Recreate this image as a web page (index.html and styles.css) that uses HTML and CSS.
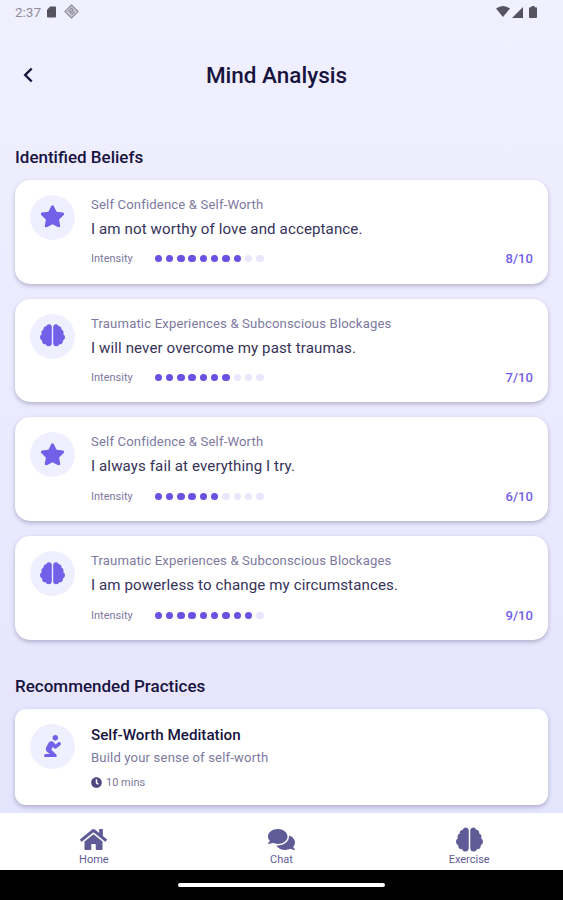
FILE: index.html
```html
<!DOCTYPE html>
<html lang="en">
<head>
  <meta charset="UTF-8" />
  <meta name="viewport" content="width=device-width, initial-scale=1.0"/>
  <title>Mind Analysis</title>
  <link rel="stylesheet" href="styles.css">
</head>
<body>

  <!-- Shared icons -->
  <svg class="sprite" aria-hidden="true">
    <symbol id="star" viewBox="0 0 576 512"><path d="M259.3 17.8L194 150.2 47.9 171.5c-26.2 3.8-36.7 36.1-17.7 54.6l105.7 103-25 145.5c-4.5 26.3 23.2 46 46.4 33.7L288 439.6l130.7 68.7c23.2 12.2 50.9-7.4 46.4-33.7l-25-145.5 105.7-103c19-18.5 8.5-50.8-17.7-54.6L382 150.2 316.7 17.8c-11.7-23.6-45.6-23.9-57.4 0z"/></symbol>
    <symbol id="brain" viewBox="0 0 576 512"><path d="M208 0c-29.9 0-54.7 20.5-61.8 48.2-.8 0-1.4-.2-2.2-.2-35.3 0-64 28.7-64 64 0 4.8.6 9.5 1.7 14C52.5 138 32 166.6 32 200c0 12.6 3.2 24.3 8.3 34.9C16.3 248.7 0 274.3 0 304c0 33.3 20.4 61.9 49.4 73.9-.9 4.6-1.4 9.3-1.4 14.1 0 39.8 32.2 72 72 72 4.1 0 8.1-.5 12-1.2 9.6 28.5 36.2 49.2 68 49.2 39.8 0 72-32.2 72-72V64c0-35.3-28.7-64-64-64zm368 304c0-29.7-16.3-55.3-40.3-69.1 5.2-10.6 8.3-22.3 8.3-34.9 0-33.4-20.5-62-49.7-74 1-4.5 1.7-9.2 1.7-14 0-35.3-28.7-64-64-64-.8 0-1.5.2-2.2.2C422.7 20.5 397.9 0 368 0c-35.3 0-64 28.6-64 64v376c0 39.8 32.2 72 72 72 31.8 0 58.4-20.7 68-49.2 3.9.7 7.9 1.2 12 1.2 39.8 0 72-32.2 72-72 0-4.8-.5-9.5-1.4-14.1 29-12 49.4-40.6 49.4-73.9z"/></symbol>
  </svg>

  <div class="status-bar">
    <div class="status-left">
      <span class="time">2:37</span>
      <svg class="sd" viewBox="0 0 10 12"><path d="M3.5 0H9a1 1 0 0 1 1 1v10a1 1 0 0 1-1 1H1a1 1 0 0 1-1-1V3.500z"/></svg>
      <svg class="diamond" viewBox="0 0 16 16"><path d="M8 1l7 7-7 7-7-7z"/><path d="M4.500 8L8 4.500l1.500 1.500M6.500 10L10 6.500M8 11.500L11.500 8M6.500 7.500L8 9"/></svg>
    </div>
    <div class="status-right">
      <svg class="wifi" viewBox="0 0 14 11"><path d="M0 2.500Q7-2.500 14 2.500L7 11z"/></svg>
      <svg class="signal" viewBox="0 0 11 11"><path d="M11 0v11H0z"/></svg>
      <svg class="battery" viewBox="0 0 8 12"><path d="M2.500 0h3v1.200H7a1 1 0 0 1 1 1V11a1 1 0 0 1-1 1H1a1 1 0 0 1-1-1V2.200a1 1 0 0 1 1-1h1.500z"/></svg>
    </div>
  </div>

  <header>
    <svg class="back" viewBox="0 0 10 16"><path d="M8.700 1.500L2.200 8l6.500 6.500"/></svg>
    <h1>Mind Analysis</h1>
  </header>

  <main>
    <h2>Identified Beliefs</h2>

    <div class="card">
      <div class="icon"><svg><use href="#star"/></svg></div>
      <div class="info">
        <p class="category">Self Confidence &amp; Self-Worth</p>
        <p class="belief">I am not worthy of love and acceptance.</p>
        <div class="intensity">
          <span class="label">Intensity</span>
          <div class="dots"><i class="on"></i><i class="on"></i><i class="on"></i><i class="on"></i><i class="on"></i><i class="on"></i><i class="on"></i><i class="on"></i><i></i><i></i></div>
          <span class="score">8/10</span>
        </div>
      </div>
    </div>

    <div class="card">
      <div class="icon"><svg><use href="#brain"/></svg></div>
      <div class="info">
        <p class="category">Traumatic Experiences &amp; Subconscious Blockages</p>
        <p class="belief">I will never overcome my past traumas.</p>
        <div class="intensity">
          <span class="label">Intensity</span>
          <div class="dots"><i class="on"></i><i class="on"></i><i class="on"></i><i class="on"></i><i class="on"></i><i class="on"></i><i class="on"></i><i></i><i></i><i></i></div>
          <span class="score">7/10</span>
        </div>
      </div>
    </div>

    <div class="card">
      <div class="icon"><svg><use href="#star"/></svg></div>
      <div class="info">
        <p class="category">Self Confidence &amp; Self-Worth</p>
        <p class="belief">I always fail at everything I try.</p>
        <div class="intensity">
          <span class="label">Intensity</span>
          <div class="dots"><i class="on"></i><i class="on"></i><i class="on"></i><i class="on"></i><i class="on"></i><i class="on"></i><i></i><i></i><i></i><i></i></div>
          <span class="score">6/10</span>
        </div>
      </div>
    </div>

    <div class="card">
      <div class="icon"><svg><use href="#brain"/></svg></div>
      <div class="info">
        <p class="category">Traumatic Experiences &amp; Subconscious Blockages</p>
        <p class="belief">I am powerless to change my circumstances.</p>
        <div class="intensity">
          <span class="label">Intensity</span>
          <div class="dots"><i class="on"></i><i class="on"></i><i class="on"></i><i class="on"></i><i class="on"></i><i class="on"></i><i class="on"></i><i class="on"></i><i class="on"></i><i></i></div>
          <span class="score">9/10</span>
        </div>
      </div>
    </div>

    <h2 class="practices">Recommended Practices</h2>

    <div class="card practice">
      <div class="icon"><svg viewBox="0 0 384 512"><path d="M256 128c35.350 0 64-28.650 64-64S291.350 0 256 0s-64 28.650-64 64 28.650 64 64 64zm-30.630 169.750c14.060 16.720 39 19.090 55.970 5.220l88-72.020c17.090-13.980 19.590-39.190 5.620-56.280-13.970-17.110-39.190-19.590-56.310-5.620l-57.440 47-38.910-46.310c-15.440-18.390-39.220-27.920-64-25.330-24.190 2.480-45.250 16.270-56.370 36.920l-49.370 92.030c-23.400 43.640-8.690 96.370 34.190 123.750L131.560 432H40c-22.090 0-40 17.910-40 40s17.910 40 40 40h208c34.080 0 53.770-42.790 28.280-68.280L166.420 333.860l34.800-64.870 24.150 28.760z"/></svg></div>
      <div class="info">
        <h3>Self-Worth Meditation</h3>
        <p class="description">Build your sense of self-worth</p>
        <div class="duration">
          <svg viewBox="0 0 512 512"><path d="M256 8C119 8 8 119 8 256s111 248 248 248 248-111 248-248S393 8 256 8zm57.100 350.100L224.900 294c-3.100-2.300-4.900-5.900-4.900-9.700V116c0-6.600 5.400-12 12-12h48c6.600 0 12 5.400 12 12v137.700l63.500 46.200c5.400 3.900 6.500 11.400 2.600 16.800l-28.200 38.800c-3.900 5.300-11.400 6.500-16.800 2.600z"/></svg>
          <span>10 mins</span>
        </div>
      </div>
    </div>
  </main>

  <nav>
    <a>
      <svg viewBox="0 0 576 512"><path d="M280.370 148.260L96 300.110V464a16 16 0 0 0 16 16l112.060-.29a16 16 0 0 0 15.920-16V368a16 16 0 0 1 16-16h64a16 16 0 0 1 16 16v95.640a16 16 0 0 0 16 16.050L464 480a16 16 0 0 0 16-16V300L295.670 148.260a12.190 12.190 0 0 0-15.300 0zM571.600 251.470L488 182.560V44.050a12 12 0 0 0-12-12h-56a12 12 0 0 0-12 12v72.610L318.470 43a48 48 0 0 0-61 0L4.340 251.470a12 12 0 0 0-1.600 16.900l25.500 31A12 12 0 0 0 45.150 301l235.220-193.740a12.190 12.190 0 0 1 15.300 0L530.900 301a12 12 0 0 0 16.900-1.600l25.500-31a12 12 0 0 0-1.700-16.930z"/></svg>
      <span>Home</span>
    </a>
    <a>
      <svg viewBox="0 0 576 512"><path d="M416 192c0-88.400-93.100-160-208-160S0 103.600 0 192c0 34.300 14.100 65.900 38 92-13.400 30.200-35.500 54.200-35.800 54.500-2.200 2.300-2.800 5.700-1.500 8.700S4.800 352 8 352c36.600 0 66.900-12.300 88.700-25 32.200 15.700 70.300 25 111.300 25 114.900 0 208-71.600 208-160zm122 220c23.900-26 38-57.700 38-92 0-66.900-53.500-124.200-129.300-148.100.9 6.600 1.300 13.300 1.300 20.100 0 105.900-107.700 192-240 192-10.800 0-21.300-.8-31.700-1.900C207.800 439.600 281.800 480 368 480c41 0 79.100-9.200 111.300-25 21.800 12.700 52.100 25 88.700 25 3.200 0 6.100-1.900 7.300-4.800 1.300-2.900.7-6.300-1.500-8.700-.3-.3-22.400-24.200-35.800-54.500z"/></svg>
      <span>Chat</span>
    </a>
    <a>
      <svg><use href="#brain"/></svg>
      <span>Exercise</span>
    </a>
  </nav>

  <footer><div class="handle"></div></footer>

</body>
</html>
```
FILE: styles.css
```css
:root {
  --color-primary: #7360e8;
  --color-dark: #17133f;
  --color-muted: #7d799e;
  --color-nav: #5f5b97;
  --color-light: #f0efff;
}

* {
  margin: 0;
  padding: 0;
  box-sizing: border-box;
}

body {
  height: 900px;
  display: flex;
  flex-direction: column;
  overflow: hidden;
  font-family: Roboto, "Liberation Sans", sans-serif;
  background: linear-gradient(#f1f0ff, #e5e4fd 813px);
  color: var(--color-dark);
}

.sprite {
  display: none;
}

.status-bar {
  height: 23px;
  padding: 0 26px 0 15px;
  display: flex;
  justify-content: space-between;
  align-items: center;
  fill: #56545f;
}

.status-left, .status-right {
  display: flex;
  align-items: center;
}

.time {
  font-size: 13.500px;
  line-height: 22px;
  color: #8f8d99;
  width: 32px;
}

.sd {
  width: 9px;
  height: 12px;
}

.diamond {
  width: 15px;
  height: 15px;
  margin-left: 8px;
  fill: #c9c8d4;
  stroke: #85838f;
  stroke-width: 1.1;
}

.wifi {
  width: 14px;
  height: 11px;
}

.signal {
  width: 11px;
  height: 11px;
  margin: 1px 6px 0 2px;
}

.battery {
  width: 8px;
  height: 12px;
}

header {
  height: 103px;
  padding: 0 23px;
  display: grid;
  grid-template-columns: 10px 1fr 20px;
  align-items: center;
}

.back {
  width: 10px;
  height: 16px;
  fill: none;
  stroke: var(--color-dark);
  stroke-width: 2.4;
}

header h1 {
  text-align: center;
  font-size: 22.500px;
  line-height: 28px;
  font-weight: 500;
}

main {
  flex: 1;
  min-height: 0;
  padding: 19px 15px 0;
  overflow: hidden;
}

h2 {
  font-size: 17px;
  line-height: 24px;
  font-weight: 500;
  margin-bottom: 10.700px;
}

.practices {
  margin-top: 34px;
}

.card {
  height: 103.900px;
  margin-bottom: 15px;
  padding: 15px;
  display: flex;
  gap: 16px;
  background: white;
  border-radius: 15px;
  box-shadow: 0 2px 4px rgba(50, 45, 90, 0.3);
}

.practice {
  height: 96.500px;
  border-radius: 11px;
}

.icon {
  width: 45px;
  height: 45px;
  border-radius: 50%;
  background: var(--color-light);
  display: flex;
  justify-content: center;
  align-items: center;
}

.icon svg {
  width: 25px;
  height: 22.500px;
  margin: 0 1px 1px 0;
  fill: var(--color-primary);
}

.info {
  flex: 1;
}

.category, .description {
  font-size: 13.100px;
  line-height: 20px;
  color: var(--color-muted);
  letter-spacing: 0.16px;
}

.belief {
  font-size: 15.100px;
  line-height: 22px;
  letter-spacing: 0.1px;
  margin-top: 3px;
  color: #36325a;
}

.intensity {
  display: flex;
  align-items: center;
  height: 16px;
  margin-top: 11px;
}

.label {
  width: 63.500px;
  font-size: 11px;
  color: var(--color-muted);
}

.dots {
  flex: 1;
  display: flex;
  gap: 3.800px;
}

.dots i {
  width: 7.500px;
  height: 7.500px;
  border-radius: 50%;
  background: #e9e7fb;
}

.dots .on {
  background: #6b51e2;
}

.score {
  font-size: 13.100px;
  font-weight: 500;
  color: var(--color-primary);
}

h3 {
  font-size: 15.200px;
  line-height: 22px;
  font-weight: 500;
}

.description {
  margin-top: 2px;
}

.duration {
  display: flex;
  align-items: center;
  gap: 4px;
  margin-top: 7px;
  font-size: 11px;
  line-height: 16px;
  color: var(--color-muted);
}

.duration svg {
  width: 11px;
  height: 11px;
  fill: #4d4780;
}

nav {
  height: 57px;
  padding-top: 14px;
  display: flex;
  background: white;
}

nav a {
  flex: 1;
  display: flex;
  flex-direction: column;
  align-items: center;
  gap: 1px;
  font-size: 11px;
  line-height: 14px;
  color: var(--color-nav);
}

nav svg {
  width: 27px;
  height: 25px;
  fill: var(--color-nav);
}

footer {
  height: 30px;
  background: black;
  display: flex;
  justify-content: center;
  align-items: center;
}

.handle {
  width: 207px;
  height: 4px;
  border-radius: 2px;
  background: white;
}
```
